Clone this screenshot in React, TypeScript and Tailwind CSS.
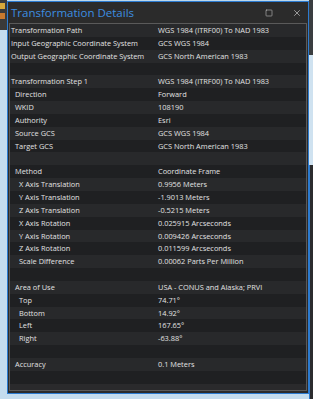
import { X, Square } from "lucide-react";

type Row = { label?: string; value?: string; level?: number };

const rows: Row[] = [
  { label: "Transformation Path", value: "WGS 1984 (ITRF00) To NAD 1983" },
  { label: "Input Geographic Coordinate System", value: "GCS WGS 1984" },
  { label: "Output Geographic Coordinate System", value: "GCS North American 1983" },
  {},
  { label: "Transformation Step 1", value: "WGS 1984 (ITRF00) To NAD 1983" },
  { label: "Direction", value: "Forward", level: 1 },
  { label: "WKID", value: "108190", level: 1 },
  { label: "Authority", value: "Esri", level: 1 },
  { label: "Source GCS", value: "GCS WGS 1984", level: 1 },
  { label: "Target GCS", value: "GCS North American 1983", level: 1 },
  {},
  { label: "Method", value: "Coordinate Frame", level: 1 },
  { label: "X Axis Translation", value: "0.9956 Meters", level: 2 },
  { label: "Y Axis Translation", value: "-1.9013 Meters", level: 2 },
  { label: "Z Axis Translation", value: "-0.5215 Meters", level: 2 },
  { label: "X Axis Rotation", value: "0.025915 Arcseconds", level: 2 },
  { label: "Y Axis Rotation", value: "0.009426 Arcseconds", level: 2 },
  { label: "Z Axis Rotation", value: "0.011599 Arcseconds", level: 2 },
  { label: "Scale Difference", value: "0.00062 Parts Per Million", level: 2 },
  {},
  { label: "Area of Use", value: "USA - CONUS and Alaska; PRVI", level: 1 },
  { label: "Top", value: "74.71°", level: 2 },
  { label: "Bottom", value: "14.92°", level: 2 },
  { label: "Left", value: "167.65°", level: 2 },
  { label: "Right", value: "-63.88°", level: 2 },
  {},
  { label: "Accuracy", value: "0.1 Meters", level: 1 },
  {},
];

const indent = ["pl-[1px]", "pl-[5px]", "pl-[9px]"];

export default function App() {
  return (
    <div
      className="flex h-[399px] w-[313px] overflow-hidden bg-[#bcd7ea]"
      style={{ fontFamily: '"Open Sans", "Noto Sans", sans-serif' }}
    >
      {/* app behind the dialog, left side */}
      <div className="flex w-[7px] flex-col">
        <div className="h-[30px] bg-[#3a3a3a]">
          <div className="mt-[3px] h-[6px] w-[5px] bg-[#d9a93a]" />
          <div className="mt-[4px] h-[6px] w-[5px] bg-[#c97a2e]" />
        </div>
        <div className="flex-1 bg-[#c4dcee]" />
      </div>

      <div className="flex w-[302px] flex-col">
        <div className="mt-[1px] flex h-[393px] flex-col border border-[#2c7bd0] bg-[#2b2b2b]">
          {/* title bar */}
          <div className="flex h-[21px] items-center pl-[3px] pr-[6px] pt-[1px]">
            <span className="flex-1 text-[11.5px] leading-none text-[#3d8ee0]">Transformation Details</span>
            <Square className="mr-[19px] h-[8px] w-[8px] text-[#d0d0d0]" strokeWidth={1.6} />
            <X className="h-[10px] w-[10px] text-[#d0d0d0]" strokeWidth={1.6} />
          </div>

          {/* property grid */}
          <div className="mx-[1px] flex flex-1 flex-col border border-[#5a5a5a] bg-[#222325]">
            {rows.map((row, i) => (
              <div
                key={i}
                className={`grid h-[12.85px] shrink-0 grid-cols-[148px_1fr] text-[7.4px] leading-[12.85px] whitespace-nowrap text-[#e2e2e2] ${
                  i % 2 === 0 ? "bg-[#28292b]" : "bg-[#1f2022]"
                }`}
              >
                <span className={indent[row.level ?? 0]}>{row.label}</span>
                <span>{row.value}</span>
              </div>
            ))}
            <div className="flex-1 bg-[#2a2a2c]" />
          </div>
          <div className="h-[2px]" />
        </div>
        <div className="flex-1 bg-[#c4dcee]" />
      </div>

      {/* app behind, right side */}
      <div className="flex w-[4px] flex-col bg-[#2b2c2e]">
        <div className="h-[55px] bg-[#3a3d40]" />
        <div className="h-[110px] bg-[#cfe2f0]" />
        <div className="flex-1 border-l border-[#2c7bd0]" />
      </div>
    </div>
  );
}
